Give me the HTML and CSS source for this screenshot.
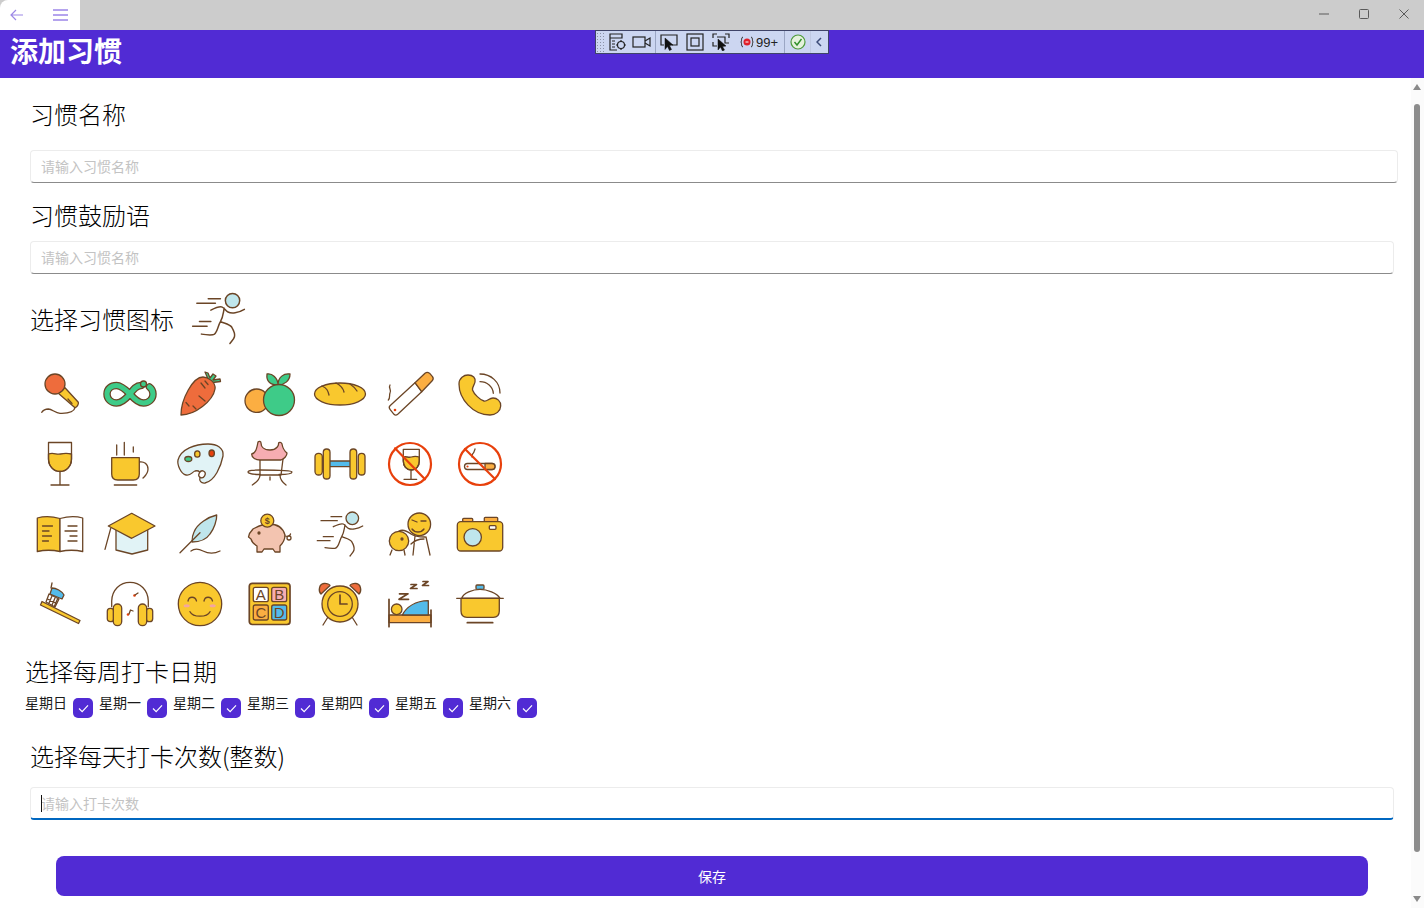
FILE: index.html
```html
<!DOCTYPE html>
<html lang="zh-CN">
<head>
<meta charset="utf-8">
<title>添加习惯</title>
<link rel="stylesheet" href="styles.css">
</head>
<body>
<div class="titlebar">
  <div class="nav-box">
    <svg class="nav-back" viewBox="0 0 14 12"><path d="M13 6H1M6 1 1 6l5 5"/></svg>
    <svg class="nav-menu" viewBox="0 0 15 12"><path d="M0 1h15M0 6h15M0 11h15"/></svg>
  </div>
  <div class="win-controls">
    <div class="win-btn"><svg viewBox="0 0 10 10"><path d="M0 5h10"/></svg></div>
    <div class="win-btn"><svg viewBox="0 0 10 10"><rect x=".5" y=".5" width="9" height="9" rx="1"/></svg></div>
    <div class="win-btn"><svg viewBox="0 0 10 10"><path d="m.5.5 9 9M9.5.5l-9 9"/></svg></div>
  </div>
</div>

<header class="app-header"><h1 class="app-title">添加习惯</h1></header>

<div class="debug-bar">
  <div class="grip"></div>
  <svg class="db-icon db-first" viewBox="0 0 20 18"><path d="M2 1h12v4H2zM2 5v12h7M4 8h3M4 11h3M4 14h3"/><circle cx="13" cy="12" r="3.500"/><path d="M13 7v2M13 15v2M8 12h2M16 12h2"/></svg>
  <svg class="db-icon db-cam" viewBox="0 0 20 18"><rect x="1" y="4" width="12" height="10"/><path d="m13 8 5-3v8l-5-3"/></svg>
  <div class="db-sep db-sep-a"></div>
  <svg class="db-icon" viewBox="0 0 20 18"><path d="M5 12H2V2h16v10h-5"/><path class="solid" d="m6 5 8 7-3.500 .5 2 4-2 1-2-4-2.500 3z"/></svg>
  <svg class="db-icon db-gap" viewBox="0 0 20 18"><rect x="2" y="1" width="16" height="16"/><rect x="6" y="5" width="8" height="8"/></svg>
  <svg class="db-icon db-gap" viewBox="0 0 20 18"><path d="M2 5V1h4M14 1h4v4M2 9v4h4M6 4h8v6h4"/><path class="solid" d="m7 6 8 7-3.500 .5 2 3.500-2 1-2-4-2.500 3z"/></svg>
  <svg class="db-rec" viewBox="0 0 14 12"><path d="M3 1C1 1 2 5 1 6c1 1 0 5 2 5M11 1c2 0 1 4 2 5-1 1 0 5-2 5"/><circle class="rec-dot" cx="7" cy="6" r="3.500"/><path class="rec-plus" d="M5.500 6h3"/></svg>
  <span class="db-count">99+</span>
  <div class="db-sep"></div>
  <svg class="db-ok" viewBox="0 0 16 16"><circle cx="8" cy="8" r="7"/><path d="m4.500 8 2.500 3 4.500-6"/></svg>
  <div class="db-sep db-sep-c"></div>
  <svg class="db-chev" viewBox="0 0 6 10"><path d="M5 1 1 5l4 4"/></svg>
</div>

<main class="main">
  <form class="form">
    <div class="label label-first">习惯名称</div>
    <input class="field field-first" type="text" placeholder="请输入习惯名称">
    <div class="label label-second">习惯鼓励语</div>
    <input class="field field-second" type="text" placeholder="请输入习惯名称">

    <div class="icon-row">
      <div class="label label-icon">选择习惯图标</div>
      <svg class="ic selected-icon" viewBox="0 0 50 50"><circle class="lb" cx="37.300" cy="9.300" r="6.300"/><path d="M16 7.700h10.700M6 11.700h16.300M8.300 27.700h10M2.300 31.700H15M18.300 17.700c4-2 7.500-3.700 10-2.700 2 .8 3 3.500 5 4.300 3 1.500 9 1 14.400-2.300M30 16c-1 5-1 8-3.300 11.700C24 32 24 39 20 39.300c-3.500.3-6.500 0-10-.6M26.700 27.700c3 1.500 8 2 10 5 1.800 3 3 5.300 2.300 8.300-.4 2-2.500 4-4 6"/></svg>
    </div>

    <div class="icon-grid">
      <!-- row 1 -->
      <div class="cell"><svg class="ic" viewBox="0 0 50 50"><path class="y" d="M23.300 24.300 30 18.700l13.300 14.600c.6 2 -1.500 5 -3.300 5.400z"/><path d="M33 30l4 4.500M6.700 43.300C9 40 11 40 13.300 40c4 .3 7 4 11.700 4.300 6 .2 14-.5 15-5.600"/><circle class="o" cx="20" cy="15" r="10"/></svg></div>
      <div class="cell"><svg class="ic" viewBox="0 0 50 50"><path class="thick-d" d="M36 16.500c-5 0-8 4.500-11 8.500-5 6-9 9-13.500 9C6 34 2 30 2 25s4-8.500 9.500-8.500c4.500 0 8.500 3.500 13.500 8.500 5 6 9 9 13.500 9 5.500 0 9.500-4 9.500-9 0-3-1.500-5.500-3.500-7"/><path class="thick-g" d="M36 16.500c-5 0-8 4.500-11 8.500-5 6-9 9-13.500 9C6 34 2 30 2 25s4-8.500 9.500-8.500c4.500 0 8.500 3.500 13.500 8.500 5 6 9 9 13.500 9 5.500 0 9.500-4 9.500-9 0-3-1.500-5.500-3.500-7"/><circle class="g" cx="38.500" cy="15" r="3"/></svg></div>
      <div class="cell"><svg class="ic" viewBox="0 0 50 50"><path class="g" d="M33 10 30 3l3 1 2 5 3-4 3 2-3 4 7-1 .5 2.500-8 1z"/><path class="o" d="M6 46C6 30 18 8 28 8c5 0 13 5 12 12-2 12-20 26-34 26z"/><path d="m26 14 4 5M30 12l3 3.500M14 37l-3-3.500M24 27l6 5M21 40l-3-3"/></svg></div>
      <div class="cell"><svg class="ic" viewBox="0 0 50 50"><circle class="a" cx="11.700" cy="31.700" r="11.700"/><path class="g" d="M33 16c-7 0-12-3-11-11 5-1 11 4 11 11zM33 16c6 0 12-4 12-11-6-1-12 3-12 11z"/><circle class="g" cx="34" cy="31" r="15.500"/></svg></div>
      <div class="cell"><svg class="ic" viewBox="0 0 50 50"><ellipse class="y" cx="25" cy="25" rx="25.500" ry="11"/><path d="M7 17c5 2 6 5 7 9M21 14c4 2 7 5 8 9M35 15c3 2 5 4 7 7"/></svg></div>
      <div class="cell"><svg class="ic" viewBox="0 0 50 50"><path class="w" d="M30 13.700 36.700 22.700 13 45c-1.500 1.300-3 1.300-4 .3l-4-5c-1-1.300-1-2.500 0-3.500z"/><path class="a" d="m30 13.700 10-9.500c1.500-1 3-1 4.500 0l3 3.500c1 1.500 .8 3-.3 4L36.700 22.700z"/><circle class="red-dot" cx="10" cy="41" r="1.300"/><path d="M5 16c-2 3 2 5 0 8-1 2 .5 5-1.700 7"/></svg></div>
      <div class="cell"><svg class="ic" viewBox="0 0 50 50"><path class="y" d="M4 15C4 9 9 6 13 6c5 0 8 3 7 7-.5 3-3 5-2.500 8C19 25 25 31 29 32c3 1 5-3 9-3s8 3 7.700 8c-.2 5-4.700 9-10.700 9C18 46 4 30 4 15z"/><path d="M25 5c11 0 20 8 20 19M25 12.700c7 0 13 5 13.300 11.600"/></svg></div>
      <!-- row 2 -->
      <div class="cell"><svg class="ic" viewBox="0 0 50 50"><path class="y" d="M13.500 15c5-2 8 1 12 0 4-1 7-1 11 0v5c0 7-5 12.500-11.500 12.500S13.500 27 13.500 20z"/><path d="M13.500 3.500h23V20c0 7-5 12.500-11.500 12.500S13.500 27 13.500 20zM25 32.500V46M16 46h18"/></svg></div>
      <div class="cell"><svg class="ic" viewBox="0 0 50 50"><path d="M34 23c5-1 9 2 9 7s-3 7-5 9M11.700 6v10M19.300 3.300V16M28.300 8v5M9.300 46h22.400"/><path class="y" d="M6.700 18.700h27.600V35c0 4-2 6-6 6H12.700c-4 0-6-2-6-6z"/></svg></div>
      <div class="cell"><svg class="ic" viewBox="0 0 50 50"><path class="pale" d="M3 21C6 10 20 5 33 5c9 0 16 4 15 12-2 10-8 25-18 27-4 .5-6-2-5-6 1-5-1-7-5-6-3 1-4 5-9 4-5-1-9-10-8-15z"/><ellipse class="g" cx="13.300" cy="20" rx="3.500" ry="2.500"/><ellipse class="y" cx="22.300" cy="15" rx="2.700" ry="3.200"/><ellipse class="red" cx="36.700" cy="14.300" rx="2.700" ry="3.300"/><ellipse class="w" cx="27" cy="35.300" rx="3" ry="3.500" transform="rotate(30 27 35.300)"/></svg></div>
      <div class="cell"><svg class="ic" viewBox="0 0 50 50"><path class="w" d="M15 20h23l-2 16H15z"/><path class="pk" d="M13 3c1-1 3-1 3 1 0 3 2 7 9 7s9-5 8.500-7c.5-1 3-1 3.500 1 .5 3 1 6 5 9 0 3-3 6-6 7H15C11 21 6.500 19 6.700 15c4-1 5-5 6.300-12z"/><path d="M15 31c-6 0-12 .5-12 2s6 2.500 12 2.500M15 31c10 0 32 .5 32 2s-5 2.500-13 2.500M15 36c0 3-3 7-7.700 10M35 36c0 4 2 7 6 10M25 38v3"/></svg></div>
      <div class="cell"><svg class="ic" viewBox="0 0 50 50"><rect class="sky" x="14" y="22" width="22" height="5.700"/><rect class="y" x="0" y="14.300" width="7.300" height="21.700" rx="3.500"/><rect class="y" x="8.300" y="10" width="6.700" height="30" rx="3.300"/><rect class="y" x="35" y="10" width="6.700" height="30" rx="3.300"/><rect class="y" x="43.300" y="14.300" width="6.700" height="21.700" rx="3.300"/></svg></div>
      <div class="cell"><svg class="ic" viewBox="0 0 50 50"><path class="y" d="M18.300 18c3-1 5 1 8 0 3-1 5-1 8 0v4c0 5-3 9-8 9s-8-4-8-9z"/><path d="M18.300 10.300h16V22c0 5-3 9-8 9s-8-4-8-9zM26 31v9.300M19 40.300h12.700"/><circle class="ban" cx="25" cy="25" r="21"/><path class="ban" d="m10 9.300 30 31"/></svg></div>
      <div class="cell"><svg class="ic" viewBox="0 0 50 50"><rect class="w" x="9.500" y="24.500" width="30.500" height="6" rx="3"/><path class="a" d="M30 24.500h7c4 0 4 6 0 6h-7z"/><path d="M17 18c-1-2 1-3 2-5 0-1 1-2 1-3"/><circle class="red-dot" cx="12.500" cy="27.500" r="1.100"/><circle class="ban" cx="25" cy="25" r="21"/><path class="ban" d="m10 10 30 30"/></svg></div>
      <!-- row 3 -->
      <div class="cell"><svg class="ic" viewBox="0 0 50 50"><path class="y" d="M2.300 9C9 7 18 7.500 25 9.500v33c-7-1.500-16-1.500-22.700 0z"/><path class="w" d="M47.700 9C41 7 32 7.500 25 9.500v33c7-1.500 16-1.500 22.700 0z"/><path d="M7.500 17h10M7.500 22H14M7.500 27h9M7.500 32h6M33 17h9M30 22h12M35 27h7M33 32h9"/></svg></div>
      <div class="cell"><svg class="ic" viewBox="0 0 50 50"><path class="pale" d="M11 20h31.700v21L27 45 11 41z"/><path class="y" d="M26.700 4.300 50 17 26.700 29.300 3.300 17z"/><path d="M5.700 19.300 0 40.300"/></svg></div>
      <div class="cell"><svg class="ic" viewBox="0 0 50 50"><path class="lb" d="M41.700 6C33 8 22 15 19 23c-2 4-2 7-2 10 8 0 14-2 18-8 4-5 7-14 6.700-19z"/><path d="m5 43.700 20-20M16 42c4-3 8-2 12 0 6 3 11 3 17 0"/></svg></div>
      <div class="cell"><svg class="ic" viewBox="0 0 50 50"><path class="sal" d="M8 20c4-2 8-5 16-5 8 0 14 4 16 11 0 6-3 9-5 11v6h-5l-2-3h-9l-2 3H12v-6c-3-2-5-3-6-7l-2.500-2 1-3.500z"/><circle class="y" cx="22.300" cy="11.700" r="6.500"/><text class="coin" x="22.300" y="15">$</text><circle class="lnk" cx="14" cy="24" r="1"/><path d="M40 27c3 1 5 0 5.500-2"/><circle class="w" cx="44" cy="29" r="2"/></svg></div>
      <div class="cell"><svg class="ic" viewBox="0 0 50 50"><circle class="lb" cx="37.300" cy="9.300" r="6.300"/><path d="M16 7.700h10.700M6 11.700h16.300M8.300 27.700h10M2.300 31.700H15M18.300 17.700c4-2 7.500-3.700 10-2.700 2 .8 3 3.500 5 4.300 3 1.500 9 1 14.400-2.300M30 16c-1 5-1 8-3.300 11.700C24 32 24 39 20 39.300c-3.500.3-6.500 0-10-.6M26.700 27.700c3 1.500 8 2 10 5 1.800 3 3 5.300 2.300 8.300-.4 2-2.500 4-4 6"/></svg></div>
      <div class="cell"><svg class="ic" viewBox="0 0 50 50"><circle class="y" cx="34.300" cy="15.300" r="11.300"/><circle class="y" cx="14" cy="32" r="9.700"/><path d="M7 41l-2 5M19 41l1 5M14 22c4-2 8 0 12 3 4 3 9 3 14 3M30 27l-2 19M41 28l4 18M26 35c3-3 8-5 13-5M27 11l5 2M36 12h5M27 20c3 4 9 4 12 0"/><circle class="lnk" cx="17" cy="30" r="1"/></svg></div>
      <div class="cell"><svg class="ic" viewBox="0 0 50 50"><rect class="a" x="7.700" y="9.300" width="10" height="5" rx="1"/><rect class="a" x="29.300" y="8.300" width="13.400" height="6" rx="1"/><rect class="y" x="2.300" y="12.700" width="45.400" height="29.300" rx="3.500"/><circle class="lb" cx="17.700" cy="28.300" r="8.700"/><rect class="w" x="34.300" y="16.700" width="6.700" height="3.600" rx="1"/></svg></div>
      <!-- row 4 -->
      <div class="cell"><svg class="ic" viewBox="0 0 50 50"><path class="y" d="m5.500 26 1.500-3.500 38 19-1.500 3z"/><path class="sky" d="m15 15 2-6c4 0 10 3 12 7l-2 4z"/><path class="w" d="m14 15 10 5-4 8-9-5z"/><path d="M17 17l-3 7M20 19l-3 7M22.500 20l-3 7M12.500 20l9 4.500M16 9l1-5"/></svg></div>
      <div class="cell"><svg class="ic" viewBox="0 0 50 50"><path d="M6.700 27.700V22C7 11 15 3.300 25 3.300S43 11 43.300 22v5.700"/><rect class="y" x="2.300" y="29.300" width="6.500" height="13.400" rx="3"/><rect class="y" x="8.300" y="25" width="8.400" height="21.700" rx="4.200"/><rect class="y" x="41.200" y="29.300" width="6.500" height="13.400" rx="3"/><rect class="y" x="33.300" y="25" width="8.400" height="21.700" rx="4.200"/><circle class="red-dot" cx="29.500" cy="16.500" r="1.300"/><path d="m30 16 3-2"/><circle class="red-dot" cx="23" cy="35.500" r="1.300"/><path d="m24 35 1.500-4 2.500 1"/></svg></div>
      <div class="cell"><svg class="ic" viewBox="0 0 50 50"><circle class="y" cx="25" cy="25" r="21.700"/><ellipse class="blush" cx="11.700" cy="26.700" rx="3" ry="1.500"/><ellipse class="blush" cx="37.700" cy="26.700" rx="3" ry="1.500"/><path d="M13 22c1-5 7-5 8.500 0M29 22c1-5 7-5 8.500 0M15 32.700c3 6 17 6 20 0"/></svg></div>
      <div class="cell"><svg class="ic" viewBox="0 0 50 50"><rect class="y ic-heavy" x="4.300" y="4.300" width="40.700" height="41.200" rx="3"/><rect class="w" x="8.300" y="8.300" width="15" height="14.400" rx="2"/><rect class="pk" x="26.700" y="8.300" width="15" height="14.400" rx="2"/><rect class="a" x="8.300" y="26" width="15" height="15" rx="2"/><rect class="sky" x="26.700" y="26" width="15" height="15" rx="2"/><text class="tile" x="15.800" y="20.500">A</text><text class="tile" x="34.200" y="20.500">B</text><text class="tile" x="15.800" y="38.500">C</text><text class="tile" x="34.200" y="38.500">D</text></svg></div>
      <div class="cell"><svg class="ic" viewBox="0 0 50 50"><path class="o" d="M6 15C3 12 4 5 9 4.500c3-.3 6 1 6 2zM44 15c3-3 2-10-3-10.500-3-.3-6 1-6 2z"/><path d="m13 38-5 8M37 38l5 8"/><circle class="y" cx="25" cy="25" r="18"/><circle cx="25" cy="25" r="12.300"/><path class="ic-heavy" d="M25 16v9h7"/></svg></div>
      <div class="cell"><svg class="ic" viewBox="0 0 50 50"><path class="a" d="M4 36h42v7.700H4z"/><circle class="y" cx="11.700" cy="30.300" r="5.300"/><path class="sky" d="M17.300 36c4-8 13-14 26-14.300V36z"/><path class="ic-heavy" d="M4 20.300v27.400M46 31v16.700M14.500 14.800h8.500l-9 5.500h9.500M26 5.500h5.500L25.500 9.500H32M38 2.500h5L37.500 6.500h6"/></svg></div>
      <div class="cell"><svg class="ic" viewBox="0 0 50 50"><rect class="sky" x="21" y="6" width="8" height="4.300" rx="1"/><path class="w" d="M6.700 19.300C8 14 18 10.300 25 10.300S42 14 45 19.300z"/><path class="y" d="M6 19.300h38.300V32c0 4-2 6.300-6 6.300H12c-4 0-6-2.300-6-6.300z"/><path d="M1.700 19.300h46.600"/><path class="ic-heavy" d="M12.300 43.700h25.400"/></svg></div>
    </div>

    <div class="label label-week">选择每周打卡日期</div>
    <div class="days">
      <span class="day">星期日</span><span class="check"><svg viewBox="0 0 12 10"><path d="m1 5 3.500 3.500L11 1.500"/></svg></span>
      <span class="day">星期一</span><span class="check"><svg viewBox="0 0 12 10"><path d="m1 5 3.500 3.500L11 1.500"/></svg></span>
      <span class="day">星期二</span><span class="check"><svg viewBox="0 0 12 10"><path d="m1 5 3.500 3.500L11 1.500"/></svg></span>
      <span class="day">星期三</span><span class="check"><svg viewBox="0 0 12 10"><path d="m1 5 3.500 3.500L11 1.500"/></svg></span>
      <span class="day">星期四</span><span class="check"><svg viewBox="0 0 12 10"><path d="m1 5 3.500 3.500L11 1.500"/></svg></span>
      <span class="day">星期五</span><span class="check"><svg viewBox="0 0 12 10"><path d="m1 5 3.500 3.500L11 1.500"/></svg></span>
      <span class="day">星期六</span><span class="check"><svg viewBox="0 0 12 10"><path d="m1 5 3.500 3.500L11 1.500"/></svg></span>
    </div>

    <div class="label label-count">选择每天打卡次数(整数)</div>
    <div class="field-wrap">
      <input class="field field-focus" type="text" placeholder="请输入打卡次数">
      <span class="caret"></span>
    </div>
    <button class="save" type="button">保存</button>
  </form>

  <div class="scrollbar">
    <div class="arrow-up"></div>
    <div class="thumb"></div>
    <div class="arrow-down"></div>
  </div>
</main>
</body>
</html>
```

FILE: styles.css
```css
* { box-sizing: border-box; }
html, body { margin: 0; height: 908px; overflow: hidden; background: #fff; }
body {
  font-family: "Noto Sans CJK SC", "Noto Sans", sans-serif;
  color: #1f1f1f;
  position: relative;
}

/* title bar */
.titlebar { height: 30px; background: #cccccc; display: flex; justify-content: space-between; }
.nav-box { width: 80px; background: #fff; border-top-left-radius: 8px; display: flex; align-items: center; }
.nav-back { width: 14px; height: 12px; margin-left: 10px; fill: none; stroke: #9c88e6; stroke-width: 1.200; }
.nav-menu { width: 15px; height: 12px; margin-left: 29px; fill: none; stroke: #6a48dc; stroke-width: 1; }
.win-controls { display: flex; }
.win-btn { width: 40px; height: 28px; display: flex; align-items: center; justify-content: center; }
.win-btn svg { width: 10px; height: 10px; fill: none; stroke: #5a5a5a; stroke-width: 1; }

/* header */
.app-header { height: 48px; background: #512bd4; padding: 4px 0 0 10px; }
.app-title { margin: 0; color: #fff; font-size: 28px; line-height: 32px; font-weight: 700; }

/* floating debug toolbar */
.debug-bar {
  position: absolute; left: 595px; top: 30px; width: 234px; height: 24px;
  background: #ccd6f1; border: 1px solid #3f4468; display: flex; align-items: center;
}
.grip {
  width: 8px; height: 20px; flex: none;
  background: radial-gradient(circle, #8c93a8 0.8px, transparent 1px) 0 0 / 3px 3px;
}
.db-icon { width: 20px; height: 18px; fill: none; stroke: #222; stroke-width: 1.200; flex: none; }
.db-icon .solid { fill: #111; stroke: #111; stroke-width: .5; }
.db-first { margin-left: 4px; }
.db-cam { margin-left: 4px; }
.db-gap { margin-left: 6px; }
.db-sep { width: 1px; height: 22px; background: #9ba6c4; flex: none; }
.db-sep-a { margin: 0 3px; }
.db-rec { width: 14px; height: 12px; margin-left: 9px; fill: none; stroke: #333; stroke-width: 1; flex: none; }
.rec-dot { fill: #e0202a; stroke: none; }
.rec-plus { stroke: #fff; }
.db-count { font-family: "Liberation Sans", sans-serif; font-size: 13px; color: #222; margin-left: 2px; width: 28px; flex: none; }
.db-ok { width: 16px; height: 16px; margin-left: 5px; fill: #e4f2dc; stroke: #4d9a3a; stroke-width: 1.200; flex: none; }
.db-ok path { fill: none; stroke: #2f8f2a; stroke-width: 1.400; }
.db-sep-c { margin-left: 4px; background: #c0c9e2; }
.db-chev { width: 6px; height: 10px; margin-left: 5px; fill: none; stroke: #3c4a78; stroke-width: 1.500; flex: none; }

/* main */
.main { display: flex; height: 830px; }
.form { flex: 1; min-width: 0; display: flex; flex-direction: column; }
.label { font-size: 24px; font-weight: 300; line-height: 30px; padding-bottom: 2px; color: #000; margin-left: 30px; white-space: nowrap; }
.label-first { margin-top: 21px; }
.label-second { margin-top: 17px; }
.label-icon { margin-top: 14px; margin-left: 0; }
.label-week { margin-top: 17px; margin-left: 25px; }
.label-count { margin-top: 23px; }

.field {
  display: block; height: 33px; margin-left: 30px; padding: 0 10px 1px;
  background: #fff; border: 1px solid #ececec; border-bottom-color: #8b8b8b; border-radius: 4px;
  font: 14px/20px "Noto Sans CJK SC", sans-serif; color: #222; outline: none;
}
.field::placeholder { color: #c3c3c3; opacity: 1; }
.field-first { margin-top: 19px; width: 1368px; }
.field-second { margin-top: 9px; width: 1364px; }
.field-wrap { position: relative; margin-top: 14px; }
.field-focus { width: 1364px; border-bottom: 2px solid #0067c0; padding-bottom: 0; }
.caret { position: absolute; left: 41px; top: 8px; width: 1px; height: 17px; background: #111; }

/* icons */
.icon-row { display: flex; margin: 16px 0 0 30px; }
.selected-icon { width: 57px; height: 57px; margin-left: 16px; }
.ic {
  flex: none; overflow: visible;
  fill: none; stroke: #6b4526; stroke-width: 1.300; stroke-linecap: round; stroke-linejoin: round;
}
.cell .ic { width: 50px; height: 50px; }
.icon-grid { display: grid; grid-template-columns: repeat(7, 70px); grid-auto-rows: 70px; margin: 12px 0 0 25px; }
.cell { display: flex; align-items: center; justify-content: center; }
.y { fill: #f9c82e; }
.o { fill: #ee6c3c; }
.g { fill: #3ecb88; }
.a { fill: #fbae42; }
.w { fill: #fff; }
.pale { fill: #e1f3f6; }
.lb { fill: #bfe6ec; }
.pk { fill: #f6adb2; }
.sal { fill: #f3c4b0; }
.sky { fill: #53bbea; }
.red { fill: #e8400c; }
.lnk { fill: #6b4526; }
.red-dot { fill: #e8400c; stroke: none; }
.blush { fill: #f4a6a0; stroke: none; }
.thick-d { stroke-width: 7.500; }
.thick-g { stroke: #3ecb88; stroke-width: 5; }
.ban { stroke: #e8400c; stroke-width: 2.200; fill: none; }
.ic-heavy { stroke-width: 1.700; }
.tile { font: 15px "Liberation Sans", sans-serif; text-anchor: middle; fill: #6b4526; stroke: none; }
.coin { font: 700 9px "Liberation Sans", sans-serif; text-anchor: middle; fill: #6b4526; stroke: none; }

/* week days */
.days { display: flex; margin: 7px 0 0 25px; height: 23px; }
.day { width: 42px; font-size: 14px; line-height: 14px; color: #1a1a1a; white-space: nowrap; }
.check {
  width: 20px; height: 20px; margin: 3px 6px 0; background: #512bd4; border-radius: 5px;
  display: flex; align-items: center; justify-content: center;
}
.check svg { width: 11px; height: 9px; fill: none; stroke: #fff; stroke-width: 1.300; }

/* button */
.save {
  display: block; width: 1312px; height: 40px; margin: 36px 0 0 56px; border: 0; border-radius: 8px;
  background: #512bd4; color: #fff; font: 14px/20px "Noto Sans CJK SC", sans-serif;
}

/* scrollbar */
.scrollbar { width: 13px; background: #fbfbfb; display: flex; flex-direction: column; align-items: center; padding: 6px 1px 0 0; }
.arrow-up { width: 0; height: 0; border: 4px solid transparent; border-top: 0; border-bottom: 6px solid #8a8a8a; }
.thumb { width: 6px; height: 748px; margin-top: 14px; background: #8c8c8c; border-radius: 3px; }
.arrow-down { width: 0; height: 0; margin-top: 44px; border: 4px solid transparent; border-bottom: 0; border-top: 6px solid #8a8a8a; }
```
